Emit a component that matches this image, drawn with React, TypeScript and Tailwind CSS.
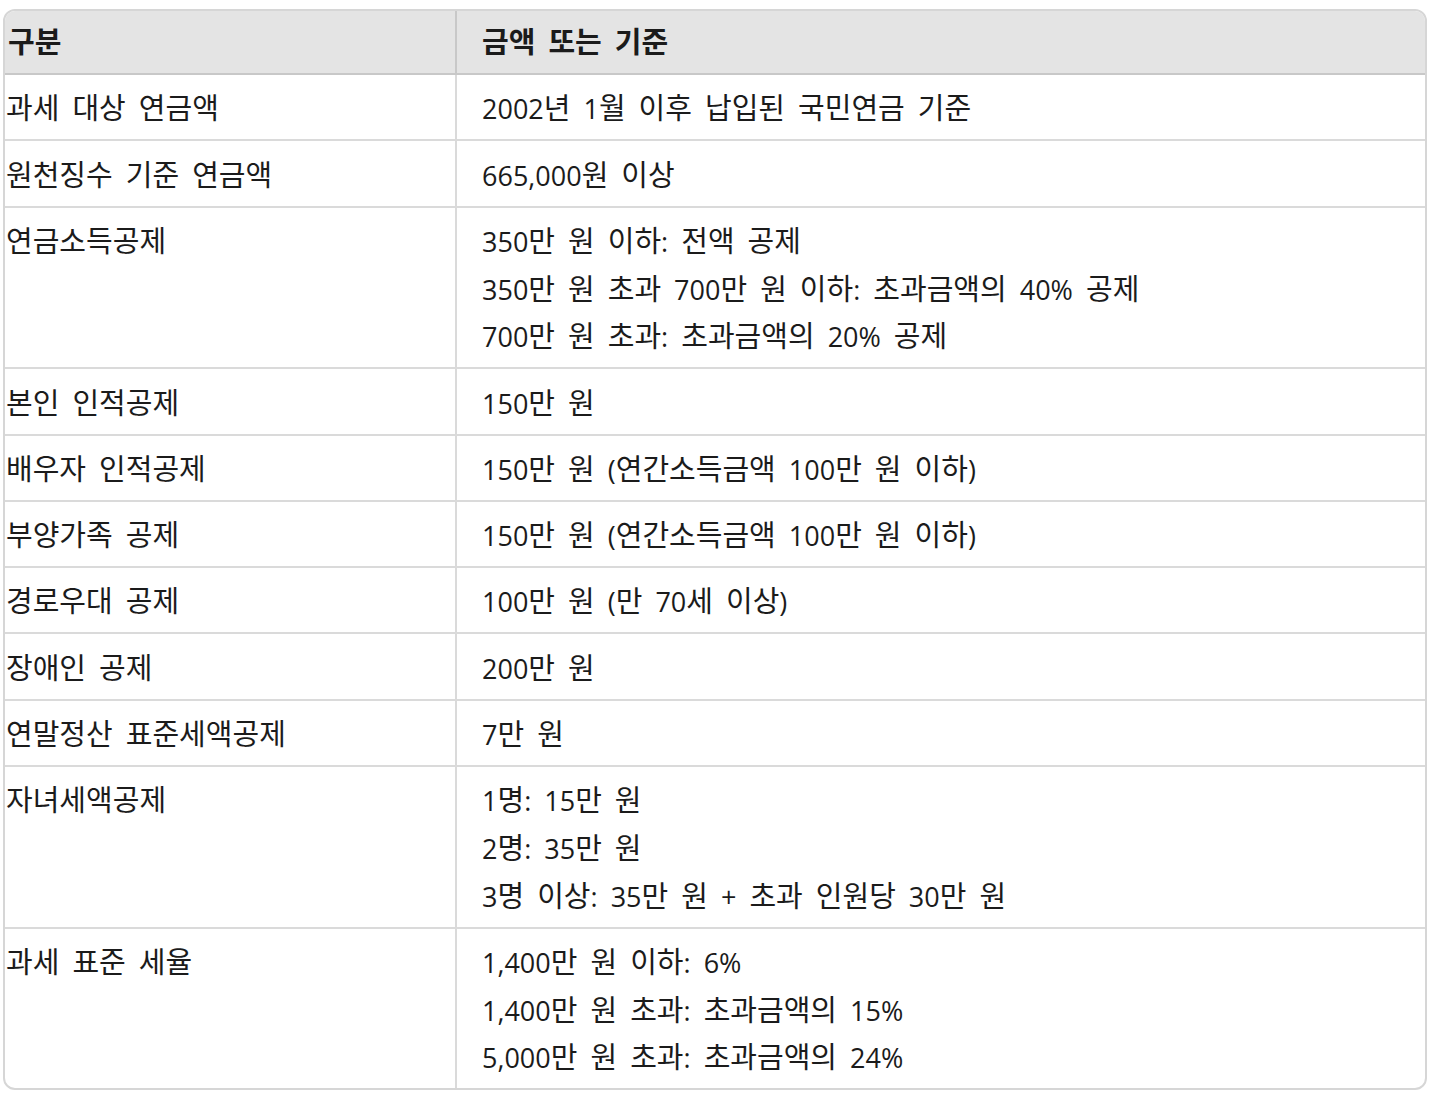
import { Fragment } from "react";

const rows: { label: string; values: string[] }[] = [
  { label: "과세 대상 연금액", values: ["2002년 1월 이후 납입된 국민연금 기준"] },
  { label: "원천징수 기준 연금액", values: ["665,000원 이상"] },
  {
    label: "연금소득공제",
    values: [
      "350만 원 이하: 전액 공제",
      "350만 원 초과 700만 원 이하: 초과금액의 40% 공제",
      "700만 원 초과: 초과금액의 20% 공제",
    ],
  },
  { label: "본인 인적공제", values: ["150만 원"] },
  { label: "배우자 인적공제", values: ["150만 원 (연간소득금액 100만 원 이하)"] },
  { label: "부양가족 공제", values: ["150만 원 (연간소득금액 100만 원 이하)"] },
  { label: "경로우대 공제", values: ["100만 원 (만 70세 이상)"] },
  { label: "장애인 공제", values: ["200만 원"] },
  { label: "연말정산 표준세액공제", values: ["7만 원"] },
  {
    label: "자녀세액공제",
    values: ["1명: 15만 원", "2명: 35만 원", "3명 이상: 35만 원 + 초과 인원당 30만 원"],
  },
  {
    label: "과세 표준 세율",
    values: ["1,400만 원 이하: 6%", "1,400만 원 초과: 초과금액의 15%", "5,000만 원 초과: 초과금액의 24%"],
  },
];

// hangul runs get a slightly larger size so they sit like the original Korean font
function KoText({ text }: { text: string }) {
  const parts = text.split(/([가-힣]+)/);
  return (
    <>
      {parts.map((p, i) =>
        /[가-힣]/.test(p) ? (
          <span key={i} className="text-[29px] font-['Noto_Sans_CJK_KR',sans-serif]">
            {p}
          </span>
        ) : (
          <Fragment key={i}>{p}</Fragment>
        )
      )}
    </>
  );
}

export default function App() {
  return (
    <div className="min-h-screen bg-white pt-[9px] px-[3px] pb-[4px] text-[#1b1b1b] font-['Open_Sans','Noto_Sans_CJK_KR',sans-serif] text-[27px] [word-spacing:6px]">
      <div className="border-2 border-[#d6d6d6] rounded-[12px] overflow-hidden">
        <div className="grid grid-cols-[452px_1fr] bg-[#e4e4e4] border-b-2 border-[#c8c8c8] font-bold">
          <div className="h-[62px] leading-[47.75px] flex items-center pl-[3px] border-r-2 border-[#c8c8c8]">
            <div><KoText text="구분" /></div>
          </div>
          <div className="h-[62px] leading-[47.75px] flex items-center pl-[25px]">
            <div><KoText text="금액 또는 기준" /></div>
          </div>
        </div>
        {rows.map((row, i) => (
          <div
            key={row.label}
            className={`grid grid-cols-[452px_1fr] ${i > 0 ? "border-t-2 border-[#dadada]" : ""}`}
          >
            <div className="py-[8.25px] pl-[1px] leading-[47.75px] border-r-2 border-[#dadada]">
              <div className="h-[47.75px]"><KoText text={row.label} /></div>
            </div>
            <div className="py-[8.25px] pl-[25px] leading-[47.75px]">
              {row.values.map((v) => (
                <div key={v} className="h-[47.75px]">
                  <KoText text={v} />
                </div>
              ))}
            </div>
          </div>
        ))}
      </div>
    </div>
  );
}
